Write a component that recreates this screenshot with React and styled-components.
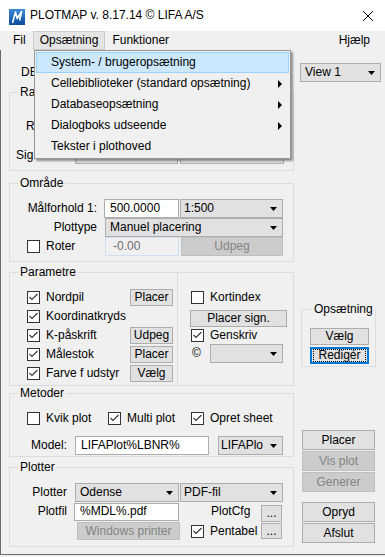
import React from 'react';
import styled, { createGlobalStyle, css } from 'styled-components';

const px = (v) => (typeof v === 'number' ? `${v}px` : v || 0);

const GlobalStyle = createGlobalStyle`
  html, body { margin: 0; padding: 0; background: #f0f0f0; }
  body {
    font-family: "Liberation Sans", Arial, sans-serif;
    font-size: 12px;
    line-height: 15px;
    color: #000;
  }
  * { box-sizing: border-box; }
`;

const Window = styled.div`
  position: relative;
  width: 385px;
  height: 557px;
  overflow: hidden;
  background: #f0f0f0;
  display: flex;
  flex-direction: column;
`;

const TitleBar = styled.div`
  height: 31px;
  flex-shrink: 0;
  background: #fff;
  display: flex;
  align-items: center;
  padding-left: 9px;
`;

const IconSvg = styled.svg`
  margin-top: 2px;
  flex-shrink: 0;
`;

const TitleText = styled.span`
  margin-left: 5px;
  white-space: nowrap;
`;

const CloseSvg = styled.svg`
  margin-left: auto;
  margin-right: 12px;
`;

const MenuBar = styled.div`
  height: 19px;
  flex-shrink: 0;
  display: flex;
  padding: 0 8px 0 6px;
  background: #f0f0f0;
`;

const MenuBarItem = styled.div`
  padding: 0 6px;
  border: 1px solid transparent;
  display: flex;
  align-items: center;
  ${(p) => p.$open && css`
    background: #e5e5e5;
    border-color: #cccccc;
  `}
  ${(p) => p.$right && css`margin-left: auto;`}
`;

const Client = styled.div`
  height: 505px;
  flex-shrink: 0;
  display: flex;
  border-left: 1px solid #6b6b6b;
  border-bottom: 1px solid #6b6b6b;
`;

const LeftColumn = styled.div`
  width: 285px;
  margin-left: 8px;
  display: flex;
  flex-direction: column;
`;

const RightColumn = styled.div`
  width: 82px;
  margin-left: 6px;
  padding-top: 13px;
  display: flex;
  flex-direction: column;
`;

const Group = styled.fieldset`
  margin: ${(p) => px(p.$mt)} 0 0 ${(p) => px(p.$ml)};
  padding: ${(p) => px(p.$pt)} 0 ${(p) => px(p.$pb)} 0;
  border: 1px solid #dcdcdc;
  min-width: 0;
  width: ${(p) => (p.$w ? `${p.$w}px` : 'auto')};
  flex-shrink: 0;
`;

const Legend = styled.legend`
  margin-left: ${(p) => px(p.$ml ?? 8)};
  padding: 0 2px;
  height: 15px;
  line-height: 15px;
  white-space: nowrap;
`;

const Row = styled.div`
  display: flex;
  align-items: center;
  height: ${(p) => p.$h || 19}px;
  margin-top: ${(p) => px(p.$mt)};
`;

const SplitRow = styled.div`
  display: flex;
  align-items: stretch;
  margin-top: ${(p) => px(p.$mt)};
`;

const SideBox = styled.div`
  width: 116px;
  margin-top: 7px;
  border: 1px solid #dcdcdc;
  border-left: none;
  padding-top: 15px;
`;

const FieldLabel = styled.div`
  width: ${(p) => (p.$w ? `${p.$w}px` : 'auto')};
  margin-left: ${(p) => px(p.$ml)};
  padding-left: ${(p) => px(p.$pl)};
  padding-right: ${(p) => px(p.$pr)};
  text-align: ${(p) => p.$align || 'left'};
  white-space: nowrap;
  flex-shrink: 0;
`;

const Field = styled.div`
  width: ${(p) => p.$w}px;
  height: ${(p) => p.$h || 19}px;
  margin-left: ${(p) => px(p.$ml)};
  padding-left: ${(p) => px(p.$pl ?? 5)};
  background: #fff;
  border: 1px solid #adadad;
  display: flex;
  align-items: center;
  white-space: nowrap;
  overflow: hidden;
  flex-shrink: 0;
  ${(p) => p.$disabled && css`
    background: #f0f0f0;
    border-color: #cddff0;
    color: #6d6d6d;
  `}
`;

const SelectBox = styled.div`
  width: ${(p) => p.$w}px;
  height: ${(p) => p.$h || 19}px;
  margin-left: ${(p) => px(p.$ml)};
  padding-left: ${(p) => px(p.$pl ?? 3)};
  padding-right: 5px;
  background: #e1e1e1;
  border: 1px solid #adadad;
  display: flex;
  align-items: center;
  white-space: nowrap;
  flex-shrink: 0;
`;

const SelectText = styled.span`
  flex: 1;
  overflow: hidden;
`;

const Select = ({ children, ...rest }) => (
  <SelectBox {...rest}>
    <SelectText>{children}</SelectText>
    <svg width="7" height="4" viewBox="0 0 7 4">
      <path d="M0 0H7L3.5 4Z" fill="#000" />
    </svg>
  </SelectBox>
);

const Button = styled.button`
  width: ${(p) => p.$w}px;
  height: ${(p) => p.$h || 19}px;
  margin: ${(p) => px(p.$mt)} ${(p) => px(p.$mr)} 0 ${(p) => px(p.$ml)};
  padding: 0;
  font: inherit;
  color: #000;
  background: #e1e1e1;
  border: 1px solid #adadad;
  display: flex;
  align-items: center;
  justify-content: center;
  white-space: nowrap;
  flex-shrink: 0;
  ${(p) => p.disabled && css`
    background: #cccccc;
    border-color: #bfbfbf;
    color: #838383;
  `}
  ${(p) => p.$focus && css`
    border: 2px solid #0078d7;
  `}
`;

const FocusRect = styled.span`
  align-self: stretch;
  flex: 1;
  margin: 0 1px;
  border: 1px dotted #000;
  display: flex;
  align-items: center;
  justify-content: center;
`;

const CheckItem = styled.div`
  display: flex;
  align-items: center;
  width: ${(p) => (p.$w ? `${p.$w}px` : 'auto')};
  margin-left: ${(p) => px(p.$ml)};
  white-space: nowrap;
  flex-shrink: 0;
`;

const Box = styled.span`
  width: 13px;
  height: 13px;
  margin-right: 6px;
  border: 1px solid #333;
  background: #fff;
  display: flex;
  align-items: center;
  justify-content: center;
  flex-shrink: 0;
`;

const Check = ({ checked, children, ...rest }) => (
  <CheckItem {...rest}>
    <Box>
      {checked && (
        <svg width="11" height="11" viewBox="0 0 11 11">
          <path d="M1.5 5 L4 7.5 L9.5 2" stroke="#333" strokeWidth="1.1" fill="none" />
        </svg>
      )}
    </Box>
    {children}
  </CheckItem>
);

const ButtonStack = styled.div`
  display: flex;
  flex-direction: column;
  margin-top: ${(p) => px(p.$mt)};
`;

const DropMenu = styled.div`
  position: absolute;
  left: 34px;
  top: 50px;
  width: 257px;
  padding: 1px;
  background: #f0f0f0;
  border: 1px solid #979797;
  box-shadow: 2px 2px 2px rgba(0, 0, 0, 0.4);
`;

const MenuItem = styled.div`
  height: 21px;
  padding: 0 6px 0 14px;
  border: 1px solid transparent;
  display: flex;
  align-items: center;
  justify-content: space-between;
  white-space: nowrap;
  ${(p) => p.$hl && css`
    background: #cce8ff;
    border-color: #99d1ff;
  `}
`;

const SubArrow = styled.span`
  width: 0;
  height: 0;
  border-left: 4px solid #000;
  border-top: 4px solid transparent;
  border-bottom: 4px solid transparent;
`;

const AppIcon = () => (
  <IconSvg width="16" height="16" viewBox="0 0 16 16">
    <defs>
      <linearGradient id="appg" x1="0" y1="0" x2="0" y2="1">
        <stop offset="0" stopColor="#3c8ad8" />
        <stop offset="1" stopColor="#0c4b9b" />
      </linearGradient>
    </defs>
    <rect width="16" height="16" fill="url(#appg)" />
    <path d="M3.5 14 L6.5 3 L8.2 9.5 L12.6 2.5 L10.6 11.5" stroke="#fff" strokeWidth="1.6" fill="none" strokeLinejoin="round" />
  </IconSvg>
);

const CloseGlyph = () => (
  <CloseSvg width="10" height="10" viewBox="0 0 10 10">
    <path d="M0 0L10 10M10 0L0 10" stroke="#000" strokeWidth="1" />
  </CloseSvg>
);

export default function App() {
  return (
    <>
      <GlobalStyle />
      <Window>
        <TitleBar>
          <AppIcon />
          <TitleText>PLOTMAP v. 8.17.14 © LIFA A/S</TitleText>
          <CloseGlyph />
        </TitleBar>

        <MenuBar>
          <MenuBarItem>Fil</MenuBarItem>
          <MenuBarItem $open>Opsætning</MenuBarItem>
          <MenuBarItem>Funktioner</MenuBarItem>
          <MenuBarItem $right>Hjælp</MenuBarItem>
        </MenuBar>

        <Client>
          <LeftColumn>
            {/* rows below are mostly covered by the open menu */}
            <Row $mt={13}>
              <FieldLabel $pl={12}>DE</FieldLabel>
            </Row>

            <Group $mt={3} $pt={17} $pb={6}>
              <Legend>Ra</Legend>
              <Row>
                <FieldLabel $pl={16}>R</FieldLabel>
              </Row>
              <Row $h={18} $mt={10}>
                <FieldLabel $w={65} $pl={6}>Sig</FieldLabel>
                <Button $w={103} $h={18} />
                <Button $w={104} $h={18} $ml={2} />
              </Row>
            </Group>

            <Group $mt={5} $pt={8} $pb={5}>
              <Legend>Område</Legend>
              <Row>
                <FieldLabel $w={88} $align="right" $pr={1}>Målforhold 1:</FieldLabel>
                <Field $w={75} $ml={6}>500.0000</Field>
                <Select $w={103} $ml={1}>1:500</Select>
              </Row>
              <Row>
                <FieldLabel $w={88} $align="right" $pr={1}>Plottype</FieldLabel>
                <Select $w={178} $ml={7} $pl={4}>Manuel placering</Select>
              </Row>
              <Row>
                <Check $ml={17} $w={78}>Roter</Check>
                <Field $w={74} $disabled $pl={7}>-0.00</Field>
                <Button $w={102} $ml={2} disabled>Udpeg</Button>
              </Row>
            </Group>

            <SplitRow $mt={3}>
              <Group $w={169} $pt={8} $pb={2}>
                <Legend>Parametre</Legend>
                <Row>
                  <Check $ml={17} checked>Nordpil</Check>
                  <Button $w={43} $h={17} $ml="auto" $mr={4}>Placer</Button>
                </Row>
                <Row>
                  <Check $ml={17} checked>Koordinatkryds</Check>
                </Row>
                <Row>
                  <Check $ml={17} checked>K-påskrift</Check>
                  <Button $w={43} $h={17} $ml="auto" $mr={4}>Udpeg</Button>
                </Row>
                <Row>
                  <Check $ml={17} checked>Målestok</Check>
                  <Button $w={43} $h={17} $ml="auto" $mr={4}>Placer</Button>
                </Row>
                <Row>
                  <Check $ml={17} checked>Farve f udstyr</Check>
                  <Button $w={43} $h={17} $ml="auto" $mr={4}>Vælg</Button>
                </Row>
              </Group>
              <SideBox>
                <Row>
                  <Check $ml={13}>Kortindex</Check>
                </Row>
                <Button $w={97} $h={17} $ml={12} $mt={3}>Placer sign.</Button>
                <Row $h={17}>
                  <Check $ml={13} checked>Genskriv</Check>
                </Row>
                <Row>
                  <FieldLabel $ml={14} $w={18}>©</FieldLabel>
                  <Select $w={73} />
                </Row>
              </SideBox>
            </SplitRow>

            <Group $pt={8} $pb={1}>
              <Legend>Metoder</Legend>
              <Row>
                <Check $ml={17} $w={81}>Kvik plot</Check>
                <Check $w={83} checked>Multi plot</Check>
                <Check checked>Opret sheet</Check>
              </Row>
              <Row $mt={8}>
                <FieldLabel $w={65} $align="right" $pr={8}>Model:</FieldLabel>
                <Field $w={134}>LIFAPlot%LBNR%</Field>
                <Select $w={65} $ml={9} $pl={2}>LIFAPlo</Select>
              </Row>
            </Group>

            <Group $mt={3} $pt={8} $pb={5}>
              <Legend>Plotter</Legend>
              <Row>
                <FieldLabel $w={65} $align="right" $pr={8}>Plotter</FieldLabel>
                <Select $w={104} $pl={4}>Odense</Select>
                <Select $w={103} $ml={1}>PDF-fil</Select>
              </Row>
              <Row>
                <FieldLabel $w={64} $align="right" $pr={7}>Plotfil</FieldLabel>
                <Field $w={105} $h={18}>%MDL%.pdf</Field>
                <FieldLabel $ml={32} $w={50}>PlotCfg</FieldLabel>
                <Button $w={21} $h={17} $mt={3}>...</Button>
              </Row>
              <Row $h={20}>
                <Button $w={103} $h={18} $ml={67} disabled>Windows printer</Button>
                <Check $ml={11} $w={70} checked>Pentabel</Check>
                <Button $w={21} $h={16}>...</Button>
              </Row>
            </Group>
          </LeftColumn>

          <RightColumn>
            <Select $w={81} $pl={4}>View 1</Select>

            <Group $mt={220} $ml={1} $w={75} $pt={11} $pb={2}>
              <Legend $ml={10}>Opsætning</Legend>
              <Button $w={59} $h={17} $ml={8}>Vælg</Button>
              <Button $w={59} $h={17} $ml={8} $mt={2} $focus>
                <FocusRect>Redigér</FocusRect>
              </Button>
            </Group>

            <ButtonStack $mt={63}>
              <Button $w={73} $h={20} $ml={2}>Placer</Button>
              <Button $w={73} $h={20} $ml={2} $mt={1} disabled>Vis plot</Button>
              <Button $w={73} $h={20} $ml={2} $mt={1} disabled>Generer</Button>
              <Button $w={73} $h={20} $ml={2} $mt={10}>Opryd</Button>
              <Button $w={73} $h={20} $ml={2} $mt={1}>Afslut</Button>
            </ButtonStack>
          </RightColumn>
        </Client>

        <DropMenu>
          <MenuItem $hl>System- / brugeropsætning</MenuItem>
          <MenuItem>Cellebiblioteker (standard opsætning)<SubArrow /></MenuItem>
          <MenuItem>Databaseopsætning<SubArrow /></MenuItem>
          <MenuItem>Dialogboks udseende<SubArrow /></MenuItem>
          <MenuItem>Tekster i plothoved</MenuItem>
        </DropMenu>
      </Window>
    </>
  );
}
